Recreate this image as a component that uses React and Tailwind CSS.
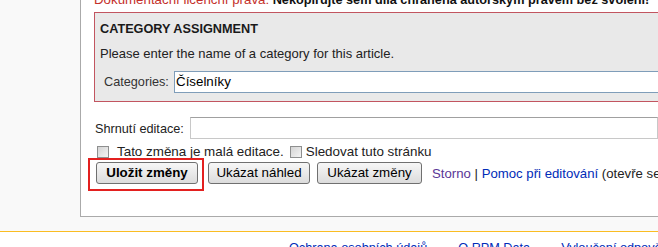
export default function App() {
  const font = { fontFamily: '"Liberation Sans", Arial, sans-serif' };
  const btn =
    "shrink-0 h-[22px] rounded-[3px] border border-[#707070] bg-gradient-to-b from-[#f7f7f7] to-[#dcdcdc] text-[13.33px] text-[#000] p-0";
  const box =
    "shrink-0 h-[12px] w-[12px] border border-[#8e8f8f] bg-gradient-to-br from-[#d4d4d4] to-[#f4f4f4]";
  return (
    <div
      className="relative w-[658px] h-[247px] overflow-hidden bg-[#f9f9f9] text-[12.7px] text-[#111]"
      style={font}
    >
      {/* content area */}
      <div className="ml-[80px] -mt-[10px] h-[227px] border-l border-b border-[#aaaaaa] bg-white pl-[13px] flex flex-col">
        <div className="h-[19px] shrink-0 leading-[19px] whitespace-nowrap">
          <span className="text-[13.3px] leading-[19px] text-[#c4302b]">Dokumentační licenční práva:</span>{" "}
          <b className="text-[#111]">Nekopírujte sem díla chráněná autorským právem bez svolení!</b>
        </div>

        {/* category box */}
        <div className="mt-[3px] h-[90px] w-[700px] shrink-0 border border-[#c25560] bg-[#e9e9e9] pl-[5px] flex flex-col">
          <div className="mt-[7px] leading-[19px] font-bold text-[#1a1a1a]">CATEGORY ASSIGNMENT</div>
          <div className="mt-[5px] leading-[19px] text-[13px] text-[#222]">
            Please enter the name of a category for this article.
          </div>
          <div className="mt-[8px] flex items-center">
            <span className="ml-[4px] w-[70px] shrink-0 leading-[19px] text-[#333]">Categories:</span>
            <div className="h-[22px] flex-1 border border-[#7f9db9] bg-white pl-[1px] text-[13.33px] leading-[20px] text-[#000]">
              Číselníky
            </div>
          </div>
        </div>

        {/* summary row */}
        <div className="mt-[15px] flex items-start">
          <span className="ml-[1px] mt-[3px] w-[95px] shrink-0 leading-[19px] text-[#222]">Shrnutí editace:</span>
          <div className="h-[22px] flex-1 border border-[#c8c8c8] border-t-[#a0a0a0] bg-white" />
        </div>

        {/* checkbox row */}
        <div className="mt-[3px] flex items-center leading-[19px] text-[13.4px] text-[#222] whitespace-nowrap">
          <span className={box + " ml-[3px]"} />
          <span className="ml-[8px]">Tato změna je malá editace.</span>
          <span className={box + " ml-[6px]"} />
          <span className="ml-[4px]">Sledovat tuto stránku</span>
        </div>

        {/* buttons row */}
        <div className="mt-[1px] flex items-center whitespace-nowrap">
          <div className="relative ml-[2px] shrink-0">
            <button className={btn + " w-[102px] font-bold"}>Uložit změny</button>
            <div className="absolute left-[-8px] top-[-4px] h-[33px] w-[116px] border-2 border-[#e3201f]" />
          </div>
          <button className={btn + " ml-[10px] w-[102px]"}>Ukázat náhled</button>
          <button className={btn + " ml-[7px] w-[105px]"}>Ukázat změny</button>
          <span className="ml-[10px] leading-[19px] text-[13.2px] text-[#222]">
            <span className="text-[#5a3696]">Storno</span> | <span className="text-[#002bb8]">Pomoc při editování</span> (otevře se v novém okně)
          </span>
        </div>
      </div>

      {/* footer */}
      <div className="mt-[14px] border-t border-[#fabd23] bg-white pt-[7px] h-[40px]">
        <div className="ml-[289px] flex gap-[31px] whitespace-nowrap leading-[19px] text-[#002bb8]">
          <span>Ochrana osobních údajů</span>
          <span>O RPM Data</span>
          <span>Vyloučení odpovědnosti</span>
        </div>
      </div>
    </div>
  );
}
